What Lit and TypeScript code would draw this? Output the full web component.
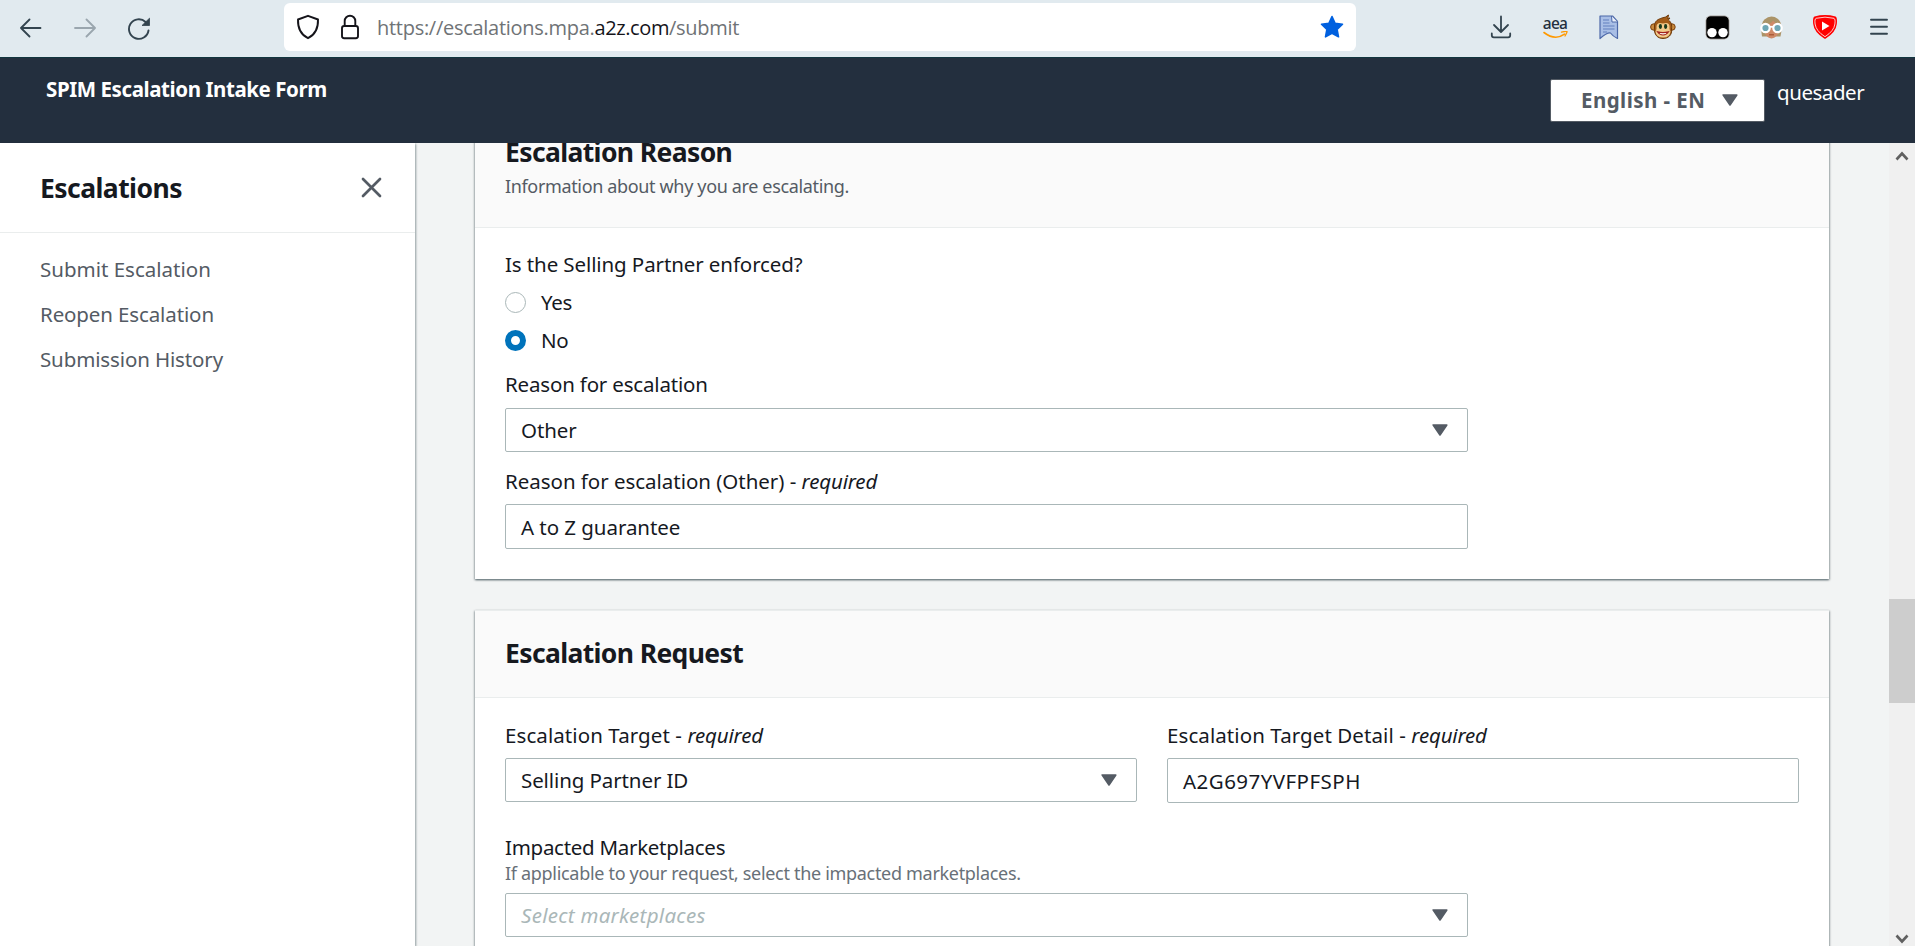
import { LitElement, html, css, svg, nothing } from "lit";
import { customElement, state } from "lit/decorators.js";
import { styleMap } from "lit/directives/style-map.js";

/** Text run with its own tracking. */
const t = (text: string, tracking = 0) =>
  html`<span style=${styleMap({ letterSpacing: `${tracking}px` })}>${text}</span>`;

const caret = html`<svg class="caret" width="16" height="12" viewBox="0 0 16 12">
  <path d="M1.2 1h13.6L8 11z" fill="#545b64" stroke="#545b64" stroke-width="1.6" stroke-linejoin="round" />
</svg>`;

const icon = (w: number, h: number, body: unknown) =>
  html`<svg class="icon" width=${w} height=${h} viewBox="0 0 ${w} ${h}">${body}</svg>`;

const line = "#33444f";

const back = icon(22, 20, svg`<path d="M20.5 10H1.5M9.5 1.5L1 10l8.500 8.500" fill="none" stroke=${line} stroke-width="1.8" stroke-linecap="round" stroke-linejoin="round"/>`);
const forward = icon(22, 20, svg`<path d="M1 10h19M12.500 1.500L21 10l-8.500 8.500" fill="none" stroke="#9aa6ae" stroke-width="1.8" stroke-linecap="round" stroke-linejoin="round"/>`);
const reload = icon(24, 24, svg`<path d="M21.500 13.500A9.800 9.800 0 1 1 18.600 5" fill="none" stroke=${line} stroke-width="1.9" stroke-linecap="round"/><path d="M22.500 1.200V8.500H15z" fill=${line} stroke=${line} stroke-width=".8" stroke-linejoin="round"/>`);
const shield = icon(24, 26, svg`<path d="M12 1.800L22 5.500C22.300 14.500 19.500 20.500 12 24.200C4.500 20.500 1.700 14.500 2 5.500Z" fill="none" stroke="#15141a" stroke-width="1.9" stroke-linejoin="round"/>`);
const lock = icon(20, 26, svg`<rect x="2" y="12" width="16" height="12.200" rx="2.200" fill="none" stroke="#15141a" stroke-width="1.900"/><path d="M4.700 12V7a5.300 5.300 0 0 1 10.600 0v5" fill="none" stroke="#15141a" stroke-width="1.900"/>`);
const star = icon(24, 24, svg`<path d="M12 1.500l3.100 6.800 7.400.900-5.400 5.100 1.400 7.500L12 18.200 5.500 21.800l1.400-7.500L1.500 9.200l7.400-.900z" fill="#0060df" stroke="#0060df" stroke-width="1.600" stroke-linejoin="round"/>`);
const download = icon(24, 26, svg`<path d="M12 2.500V17.500M5 11l7 7 7-7M2.800 19.500v1.800a2 2 0 0 0 2 2h14.400a2 2 0 0 0 2-2v-1.800" fill="none" stroke=${line} stroke-width="1.800" stroke-linecap="round" stroke-linejoin="round"/>`);
const smile = icon(25, 8, svg`<path d="M1 1.500Q12 10 21.500 3.200" fill="none" stroke="#f90" stroke-width="1.600" stroke-linecap="round"/><path d="M18.500 1.200Q24.500-.5 24 1T22 5" fill="none" stroke="#f90" stroke-width="1.300" stroke-linecap="round"/>`);
const page = icon(20, 25, svg`<path d="M1 1H13.500L18.500 6.500V23.500Q14 21.500 11.500 18Q8 17.500 1 23.500Z" fill="#a9bfe6" stroke="#4c68a8" stroke-width="1.200" stroke-linejoin="round"/><path d="M12.500 1L13 7h5.500" fill="#e9f0fb" stroke="#4c68a8"/><path d="M4 5h6M4 8h6.500M4 11h11.500M4 14h11.500M4 17h4" stroke="#6280bd" stroke-width="1.200"/>`);
const monkey = icon(26, 26, svg`
  <circle cx="3.800" cy="13" r="3.200" fill="#c98a3c" stroke="#7b4210"/><circle cx="22" cy="13" r="3.200" fill="#c98a3c" stroke="#7b4210"/>
  <path d="M4.500 13C4 6.500 9 5 12 4Q16 3.500 18.500 1Q18 4 17.500 4.500L20 4Q18.500 5.500 18.500 6C21.500 8.500 22 11 21.500 15C22.500 21 18 24.500 13 24.500S3.500 21 4.500 13Z" fill="#a35c17" stroke="#6e3908"/>
  <path d="M6.500 12.500Q7 7.500 12.800 9.500Q19.500 7.500 19.500 12.500Q19 15 20.500 17.500Q20 23.500 13 23.500T5.500 17.500Q7 15 6.500 12.500Z" fill="#f2cb8b"/>
  <ellipse cx="10.400" cy="12.500" rx="1.600" ry="2.400" fill="#193a1c"/><ellipse cx="15.600" cy="12.500" rx="1.600" ry="2.400" fill="#193a1c"/>
  <path d="M7.500 17.800Q13 19.500 18.500 17.800Q16.500 21 13 21T7.500 17.800Z" fill="#fff" stroke="#a2231d" stroke-width="1.200"/>`);
const tamper = icon(25, 25, svg`<rect x=".8" y=".8" width="23.400" height="23.400" rx="5" fill="#000" stroke="#d8d4cf" stroke-width=".8"/><circle cx="7" cy="17.600" r="4.700" fill="#fff"/><circle cx="18" cy="17.600" r="4.700" fill="#fff"/>`);
const face = icon(25, 25, svg`
  <path d="M3 21.500Q1 9 5.500 4.500Q12-1 19 4Q24.500 9 21.500 21.500Z" fill="#ab9468"/>
  <path d="M5.200 10Q13 8.500 14 5.500Q16 9 20 10V16Q18.500 22.500 12.500 23.500Q6.500 22.500 5.200 16Z" fill="#cf8a67"/>
  <circle cx="6.500" cy="13" r="4.200" fill="#6fa7b5" stroke="#fff" stroke-width="2.200"/><circle cx="18.500" cy="13" r="4.200" fill="#6fa7b5" stroke="#fff" stroke-width="2.200"/>
  <path d="M10.500 11.800h4" stroke="#fff" stroke-width="1.800"/><path d="M10 19.800h5" stroke="#a3512f" stroke-width="1.200"/>`);
const video = icon(26, 26, svg`<path d="M2.500 2.500Q13-.4 23.500 2.500Q25.500 3.500 24.800 10Q24 18 13.800 24.600Q13 25 12.200 24.600Q2 18 1.200 10Q.5 3.500 2.500 2.500Z" fill="#f00"/><path d="M4 4.300Q13 2 22 4.300Q23.500 5 22.900 10Q22 17 13 22.700Q4 17 3.100 10Q2.500 5 4 4.300Z" fill="none" stroke="#fff" stroke-width=".8"/><path d="M10 7.500v9L17.500 12z" fill="#fff"/>`);
const menu = icon(18, 18, svg`<path d="M1 1.800h16M1 8.800h16M1 15.800h16" stroke=${line} stroke-width="1.900" stroke-linecap="round"/>`);
const cross = icon(21, 21, svg`<path d="M2 2l17 17M19 2L2 19" stroke="#545b64" stroke-width="2.700" stroke-linecap="round"/>`);
const up = icon(14, 10, svg`<path d="M1.500 8.500L7 2.500l5.500 6" fill="none" stroke="#606060" stroke-width="2.600"/>`);
const down = icon(14, 10, svg`<path d="M1.500 1.500L7 7.500l5.500-6" fill="none" stroke="#606060" stroke-width="2.600"/>`);

@customElement("app-root")
export class AppRoot extends LitElement {
  static styles = css`
    :host { display: flex; flex-direction: column; width: 1915px; height: 946px; overflow: hidden;
      font-family: "Noto Sans", "Open Sans", sans-serif; font-size: 20.5px; line-height: 28px; color: #16191f; background: #f2f4f4; }
    * { box-sizing: border-box; }
    span { white-space: pre; }
    svg { display: block; flex: none; }

    .browser { flex: none; height: 57px; background: #e1eaef; display: flex; align-items: flex-start; }
    .nav { display: flex; flex: none; width: 284px; height: 56px; align-items: center; padding-left: 20px; }
    .nav svg:nth-child(2) { margin-left: 32px; }
    .nav svg:nth-child(3) { margin: 2px 0 0 31px; }
    .url { display: flex; flex: none; align-items: center; width: 1072px; height: 48px; margin-top: 3px; border-radius: 6px; background: #fff; padding: 0 12px; }
    .url svg:nth-child(2) { margin-left: 20px; }
    .address { flex: 1; margin: 2px 0 0 17px; font-family: "Open Sans", sans-serif; font-size: 20px; color: #6f7376; }
    .address b { font-weight: 400; color: #15141a; }
    .tools { display: flex; flex: none; height: 54px; align-items: center; padding-left: 118px; }
    .tool { display: flex; flex-direction: column; align-items: center; width: 54px; }
    .aea { font-size: 15.5px; line-height: 15px; color: #232f3e; font-weight: 500; }

    .top { flex: none; height: 86px; background: #232f3e; border-top: 1px solid #12363f; display: flex; align-items: flex-start; color: #fff; padding: 0 50px 0 46px; }
    .brand { flex: 1; margin-top: 17px; font-weight: 700; }
    .lang { display: flex; width: 215px; height: 43px; align-items: center; justify-content: space-between; margin-top: 20.500px; padding: 0 26px 1px 30px;
      background: #fff; border: 1px solid #545b64; border-radius: 2px; color: #545b64; font: inherit; font-weight: 700; }
    .user { margin: 20px 0 0 12px; width: 88px; }

    .body { flex: 1; display: flex; min-height: 0; }
    .side { width: 415px; flex: none; background: #fff; box-shadow: 1px 1px 2px rgba(0, 28, 36, .4); z-index: 1; }
    .side header { height: 90px; border-bottom: 1px solid #eaeded; display: flex; align-items: center; justify-content: space-between; padding: 0 33px 0 40px; }
    h2 { margin: 0; font-size: 26.5px; line-height: 36px; font-weight: 700; }
    .links { display: flex; flex-direction: column; gap: 17px; padding: 22px 40px; color: #545b64; }

    .main { flex: 1; overflow: hidden; padding: 0 60px; }
    .stack { display: flex; flex-direction: column; gap: 31px; margin-top: -34px; }
    .card { background: #fff; box-shadow: 0 1px 2px 0 rgba(0, 28, 36, .5), 1px 1px 2px 0 rgba(0, 28, 36, .2), -1px 1px 2px 0 rgba(0, 28, 36, .15); }
    .card > header { padding: 24px 30px 26px; background: #fafafa; border-top: 1px solid #eaeded; border-bottom: 1px solid #eaeded; }
    .card > header p { margin: 4px 0 3px; }
    p { margin: 0; font-size: 18px; line-height: 24px; color: #545b64; }
    .content { padding: 22px 30px 30px; }
    .label { height: 28px; }
    .radio { display: flex; align-items: center; height: 28px; gap: 15px; margin-top: 10px; }
    .dot { width: 21px; height: 21px; margin-top: 1px; border-radius: 50%; border: 1.500px solid #aab7b8; background: #fff; }
    .dot.on { border: 6px solid #0073bb; }
    .box { display: flex; align-items: center; justify-content: space-between; height: 44px; margin-top: 10px; padding: 0 19px 1px 15px; border: 1px solid #aab7b8; border-radius: 2px; background: #fff; }
    .box.input { height: 45px; padding-bottom: 0; margin-top: 9px; }
    .wide { width: 963px; }
    .gap { margin-top: 16px; }
    .gap + .gap { margin-top: 15px; }
    .grid { display: grid; grid-template-columns: 1fr 1fr; gap: 30px; padding-top: 1px; }
    .grid .box { margin-top: 9px; }
    .market { margin-top: 30px; }
    .market .box { margin-top: 8px; }
    .market p { color: #687078; }
    .hint { color: #aab7b8; font-style: italic; }

    .bar { width: 26px; flex: none; background: #f0f0f0; display: flex; flex-direction: column; align-items: center; padding: 8px 0 2px; }
    .thumb { width: 26px; height: 104px; background: #cdcdcd; margin: 438px 0 auto; }
  `;

  @state() private enforced = "No";

  private box(text: unknown, select = true) {
    return html`<div class="box ${select ? "" : "input"}">${text}${select ? caret : nothing}</div>`;
  }

  private required = html`<i>${t("required", -0.17)}</i>`;

  render() {
    return html`
      <div class="browser">
        <div class="nav">${back}${forward}${reload}</div>
        <div class="url">${shield}${lock}
          <div class="address">${t("https://escalations.mpa.", -0.28)}<b>${t("a2z.com", -0.4)}</b>${t("/submit", -0.3)}</div>${star}</div>
        <div class="tools">
          ${[download, html`<span class="aea">${t("aea", -0.7)}</span>${smile}`, page, monkey, tamper, face, video, menu].map((i) => html`<div class="tool">${i}</div>`)}
        </div>
      </div>
      <div class="top">
        <div class="brand">${t("SPIM Escalation Intake Form", -0.42)}</div>
        <button class="lang">${t("English - EN", 0.45)}${caret}</button>
        <div class="user">${t("quesader", -0.45)}</div>
      </div>
      <div class="body">
        <nav class="side">
          <header><h2>${t("Escalations", -0.55)}</h2>${cross}</header>
          <div class="links">${t("Submit Escalation", 0)}${t("Reopen Escalation", -0.12)}${t("Submission History", -0.13)}</div>
        </nav>
        <main class="main">
          <div class="stack">
            <section class="card">
              <header><h2>${t("Escalation Reason", -0.62)}</h2><p>${t("Information about why you are escalating.", -0.35)}</p></header>
              <div class="content">
                <div class="label">${t("Is the Selling Partner enforced?", -0.1)}</div>
                ${["Yes", "No"].map((o) => html`<div class="radio" @click=${() => (this.enforced = o)}><div class="dot ${o === this.enforced ? "on" : ""}"></div>${t(o, -0.3)}</div>`)}
                <div class="wide gap">
                  <div class="label">${t("Reason for escalation", -0.18)}</div>
                  ${this.box(t("Other", -0.1))}
                </div>
                <div class="wide gap">
                  <div class="label">${t("Reason for escalation (Other) - ", -0.03)}${this.required}</div>
                  ${this.box(t("A to Z guarantee", -0.05), false)}
                </div>
              </div>
            </section>
            <section class="card">
              <header><h2>${t("Escalation Request", -0.63)}</h2></header>
              <div class="content">
                <div class="grid">
                  <div><div class="label">${t("Escalation Target - ", 0.08)}${this.required}</div>${this.box(t("Selling Partner ID", -0.1))}</div>
                  <div><div class="label">${t("Escalation Target Detail - ", 0.08)}${this.required}</div>${this.box(t("A2G697YVFPFSPH", 0.46), false)}</div>
                </div>
                <div class="wide market">
                  <div class="label">${t("Impacted Marketplaces", -0.28)}</div>
                  <p>${t("If applicable to your request, select the impacted marketplaces.", -0.31)}</p>
                  ${this.box(html`<span class="hint">${t("Select marketplaces", 0.28)}</span>`)}
                </div>
              </div>
            </section>
          </div>
        </main>
        <div class="bar">${up}<div class="thumb"></div>${down}</div>
      </div>
    `;
  }
}
